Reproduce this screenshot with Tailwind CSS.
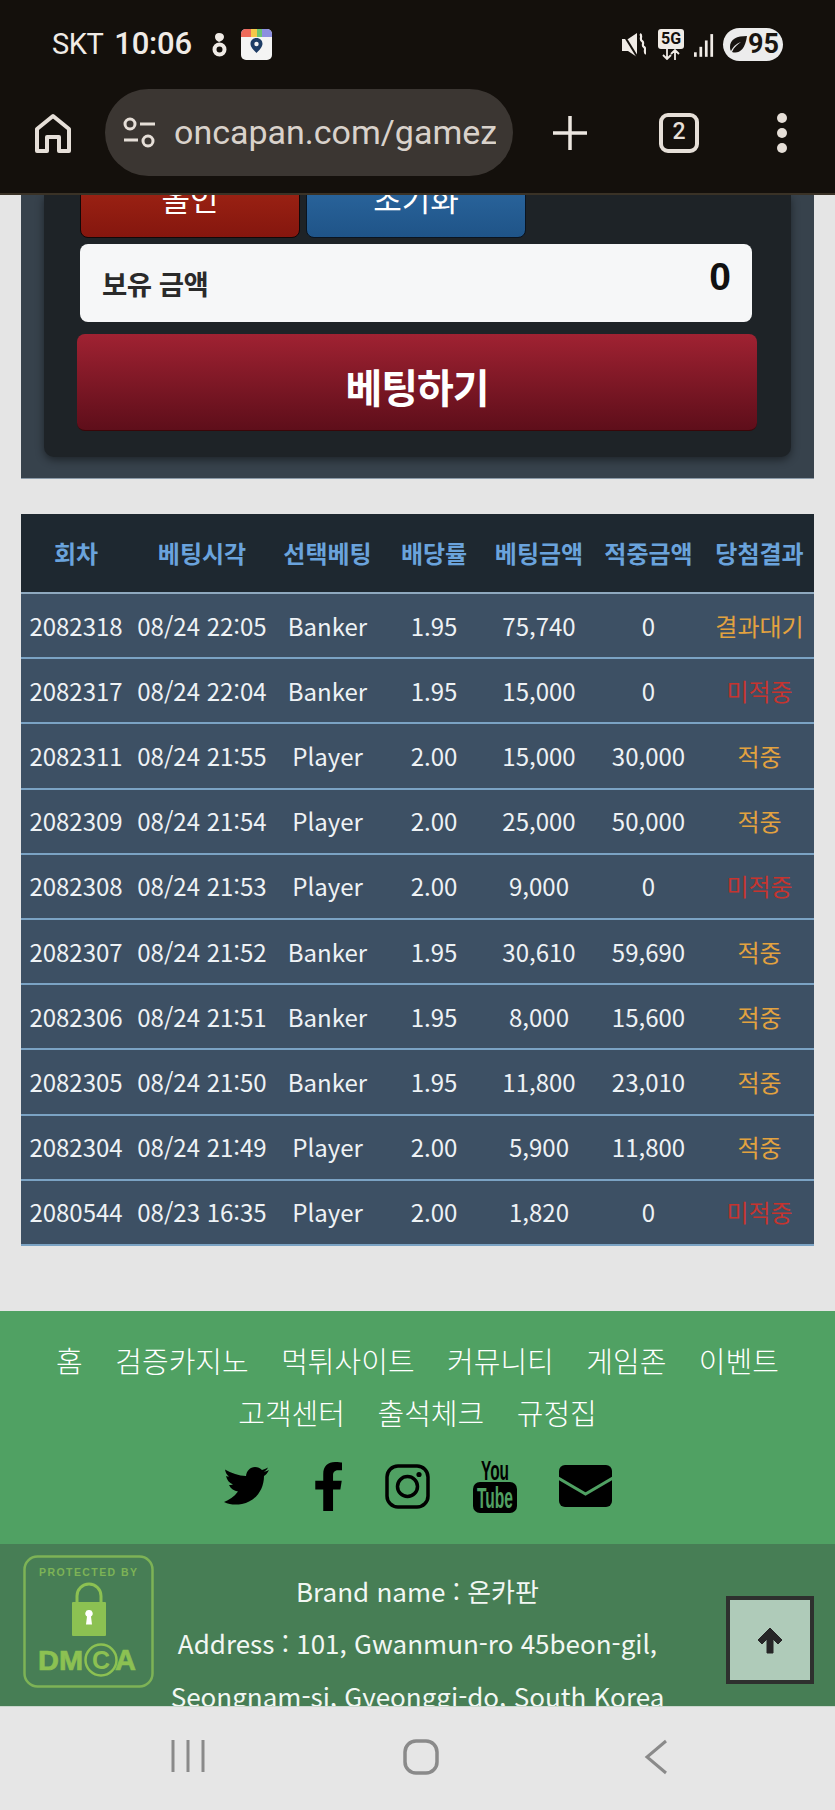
<!DOCTYPE html>
<html lang="ko">
<head>
<meta charset="UTF-8">
<title>oncapan</title>
<script src="https://cdn.jsdelivr.net/npm/@tailwindcss/browser@4"></script>
</head>
<body class="w-[835px] h-[1810px] overflow-hidden bg-[#e5e5e5] font-['Noto_Sans_CJK_KR',sans-serif]">

<!-- phone status bar + browser toolbar -->
<div class="h-[195px] bg-[#14100c] border-b-2 border-[#3a3226] text-[#f0ebe6]">
  <div class="h-[89px] flex items-center pl-[52px] pr-[52px]">
    <span class="font-['Roboto',sans-serif] text-[29px] tracking-[-0.5px]">SKT</span>
    <span class="font-['Roboto',sans-serif] font-medium text-[31px] ml-[11px] tracking-[-0.2px]">10:06</span>
    <svg class="ml-[20px]" width="15" height="26" viewBox="0 0 15 26"><circle cx="7.500" cy="17.500" r="5" fill="none" stroke="#f0ebe6" stroke-width="4"/><path d="M7 1c3 0 5 1.500 5 4 0 2-2 4-5 5-2.500-1-4-3-4-5 0-2.500 1.500-4 4-4z" fill="#f0ebe6"/></svg>
    <svg class="ml-[14px]" width="31" height="31" viewBox="0 0 31 31"><rect width="31" height="31" rx="5" fill="#f4f4f4"/><path d="M5 0h21a5 5 0 0 1 5 5v3H0V5a5 5 0 0 1 5-5z" fill="#8c8fe0"/><path d="M5 0h5v8H0V5a5 5 0 0 1 5-5z" fill="#ef6a5a"/><path d="M10 0h6v8h-6z" fill="#f5c84a"/><path d="M16 0h5v8h-5z" fill="#6cc56f"/><path d="M15.500 9c-3.600 0-6 2.600-6 5.800 0 3.600 3.600 6.800 6 9.200 2.400-2.400 6-5.600 6-9.200 0-3.200-2.400-5.800-6-5.800z" fill="#1e3d66"/><circle cx="15.500" cy="15" r="2.200" fill="#f4f4f4"/></svg>
    <div class="ml-auto flex items-center">
      <svg width="24" height="30" viewBox="0 0 24 30"><path d="M0 9h6l9-6v24l-9-6H0z" fill="#f0ebe6"/><path d="M0 2l16 26" stroke="#14100c" stroke-width="2"/><path d="M18 4c3 2 -1 5 2 7s-1 4 2 6-1 4 2 7" fill="none" stroke="#f0ebe6" stroke-width="2.200"/></svg>
      <div class="ml-[12px] w-[26px] flex flex-col items-center">
        <span class="w-[26px] h-[20px] bg-[#f0ebe6] rounded-[3px] text-[#14100c] text-[16px] leading-[20px] text-center font-bold font-['Roboto',sans-serif]">5G</span>
        <svg width="20" height="11" viewBox="0 0 20 11"><path d="M6 0v10M2 6l4 4 4-4M14 11V1M10 5l4-4 4 4" fill="none" stroke="#f0ebe6" stroke-width="1.800"/></svg>
      </div>
      <svg class="ml-[10px]" width="20" height="30" viewBox="0 0 22 30"><rect x="0" y="23" width="3" height="5" fill="#f0ebe6"/><rect x="6" y="17" width="3" height="11" fill="#f0ebe6"/><rect x="12" y="10" width="3" height="18" fill="#f0ebe6"/><rect x="18" y="3" width="3" height="25" fill="#f0ebe6"/></svg>
      <div class="ml-[9px] w-[60px] h-[33px] bg-[#ececec] rounded-full flex items-center pl-[4px] text-[#181410]">
        <svg width="21" height="20" viewBox="0 0 21 20"><path d="M20 1C10 1 3 4 3 12c0 2 .5 3 1 4 3-6 7-8 10-9-3 2-7 5-9 10 6 2 13-1 15-16z" fill="#181410"/></svg>
        <span class="font-['Roboto',sans-serif] font-bold text-[27px] leading-none">95</span>
      </div>
    </div>
  </div>
  <div class="flex items-center h-[87px]">
    <svg class="ml-[34px]" width="38" height="40" viewBox="0 0 38 40"><path d="M3 38V16L19 3l16 13v22H25V24H13v14z" fill="none" stroke="#e6dfd8" stroke-width="4" stroke-linejoin="round"/></svg>
    <div class="ml-[33px] w-[408px] h-[87px] rounded-full bg-[#3b3632] flex items-center pl-[18px]">
      <svg width="33" height="31" viewBox="0 0 33 31"><circle cx="7" cy="7" r="5" fill="none" stroke="#e6dfd8" stroke-width="3"/><path d="M17 7h15M1 23h14" stroke="#e6dfd8" stroke-width="3"/><circle cx="25" cy="24" r="5" fill="none" stroke="#e6dfd8" stroke-width="3"/></svg>
      <div class="ml-[18px] w-[322px] overflow-hidden whitespace-nowrap font-['Roboto',sans-serif] text-[34px] text-[#d9d2cb]">oncapan.com/gamezone</div>
    </div>
    <svg class="ml-[39px]" width="36" height="36" viewBox="0 0 36 36"><path d="M18 1v34M1 18h34" stroke="#ece6e0" stroke-width="3.500"/></svg>
    <div class="ml-[71px] w-[40px] h-[40px] border-[4px] border-[#e6dfd8] rounded-[9px] flex items-center justify-center font-['Roboto',sans-serif] font-medium text-[23px] text-[#e6dfd8]">2</div>
    <div class="ml-[78px] flex flex-col gap-[5px]">
      <span class="w-[10px] h-[10px] rounded-full bg-[#e6dfd8]"></span>
      <span class="w-[10px] h-[10px] rounded-full bg-[#e6dfd8]"></span>
      <span class="w-[10px] h-[10px] rounded-full bg-[#e6dfd8]"></span>
    </div>
  </div>
</div>

<!-- scrolled page -->
<div class="h-[1511px] overflow-hidden">
  <div class="mx-[21px] w-[793px] h-[284px] bg-[#37424c] border-b border-[#8b9aa8] px-[23px]">
    <div class="h-[262px] bg-[#1e2327] rounded-b-[10px] shadow-[0_3px_8px_rgba(0,0,0,0.45)] overflow-hidden">
      <div class="flex gap-[6px] pl-[36px] -mt-[27px]">
        <div class="w-[220px] h-[70px] rounded-[8px] border border-[#120808] bg-gradient-to-b from-[#a52716] to-[#85160e] text-white text-[31px] text-center leading-[58px]">올인</div>
        <div class="w-[220px] h-[70px] rounded-[8px] border border-[#0a1420] bg-gradient-to-b from-[#2e6ba4] to-[#1f5488] text-white text-[31px] text-center leading-[58px]">초기화</div>
      </div>
      <div class="ml-[36px] mt-[6px] w-[672px] h-[78px] rounded-[8px] bg-[#f6f7f8] flex justify-between pl-[22px] pr-[21px]">
        <span class="text-[27.500px] font-bold text-[#2a2a2a] leading-[78px] tracking-[-0.5px]">보유 금액</span>
        <span class="font-['Liberation_Sans',sans-serif] text-[39px] font-bold text-[#111] leading-[66px]">0</span>
      </div>
      <div class="ml-[33px] mt-[12px] w-[680px] h-[97px] rounded-[8px] border-b border-[#3a0608] bg-gradient-to-b from-[#a02232] to-[#5e0e1a] text-white text-[40px] font-bold text-center leading-[104px] tracking-[-1px]">베팅하기</div>
    </div>
  </div>

  <table class="mt-[35px] ml-[21px] w-[793px] table-fixed border-collapse text-center text-[24px] text-[#eef2f5] whitespace-nowrap">
    <thead class="bg-[#1e2830] text-[#6aa3dc]">
      <tr class="h-[79px] border-b-2 border-[#8fa9bf]">
        <th class="w-[110px] font-bold">회차</th><th class="w-[142px] font-bold">베팅시각</th><th class="w-[109px] font-bold">선택베팅</th><th class="w-[104px] font-bold">배당률</th><th class="w-[106px] font-bold">베팅금액</th><th class="w-[113px] font-bold">적중금액</th><th class="w-[109px] font-bold">당첨결과</th>
      </tr>
    </thead>
    <tbody class="bg-[#3d5064]">
      <tr class="h-[65.2px] border-b-2 border-[#7ba3c4]"><td>2082318</td><td>08/24 22:05</td><td>Banker</td><td>1.95</td><td>75,740</td><td>0</td><td class="text-[#e3a23f]">결과대기</td></tr>
      <tr class="h-[65.2px] border-b-2 border-[#7ba3c4]"><td>2082317</td><td>08/24 22:04</td><td>Banker</td><td>1.95</td><td>15,000</td><td>0</td><td class="text-[#c5342f]">미적중</td></tr>
      <tr class="h-[65.2px] border-b-2 border-[#7ba3c4]"><td>2082311</td><td>08/24 21:55</td><td>Player</td><td>2.00</td><td>15,000</td><td>30,000</td><td class="text-[#e3a23f]">적중</td></tr>
      <tr class="h-[65.2px] border-b-2 border-[#7ba3c4]"><td>2082309</td><td>08/24 21:54</td><td>Player</td><td>2.00</td><td>25,000</td><td>50,000</td><td class="text-[#e3a23f]">적중</td></tr>
      <tr class="h-[65.2px] border-b-2 border-[#7ba3c4]"><td>2082308</td><td>08/24 21:53</td><td>Player</td><td>2.00</td><td>9,000</td><td>0</td><td class="text-[#c5342f]">미적중</td></tr>
      <tr class="h-[65.2px] border-b-2 border-[#7ba3c4]"><td>2082307</td><td>08/24 21:52</td><td>Banker</td><td>1.95</td><td>30,610</td><td>59,690</td><td class="text-[#e3a23f]">적중</td></tr>
      <tr class="h-[65.2px] border-b-2 border-[#7ba3c4]"><td>2082306</td><td>08/24 21:51</td><td>Banker</td><td>1.95</td><td>8,000</td><td>15,600</td><td class="text-[#e3a23f]">적중</td></tr>
      <tr class="h-[65.2px] border-b-2 border-[#7ba3c4]"><td>2082305</td><td>08/24 21:50</td><td>Banker</td><td>1.95</td><td>11,800</td><td>23,010</td><td class="text-[#e3a23f]">적중</td></tr>
      <tr class="h-[65.2px] border-b-2 border-[#7ba3c4]"><td>2082304</td><td>08/24 21:49</td><td>Player</td><td>2.00</td><td>5,900</td><td>11,800</td><td class="text-[#e3a23f]">적중</td></tr>
      <tr class="h-[65.2px] border-b-2 border-[#7ba3c4]"><td>2080544</td><td>08/23 16:35</td><td>Player</td><td>2.00</td><td>1,820</td><td>0</td><td class="text-[#c5342f]">미적중</td></tr>
    </tbody>
  </table>

  <footer class="mt-[65px]">
    <div class="h-[233px] bg-[#50a163] pt-[23px]">
      <nav class="w-[790px] mx-auto flex flex-wrap justify-center gap-x-[32.500px] text-white text-[29px] font-light leading-[52px]">
        <span>홈</span><span>검증카지노</span><span>먹튀사이트</span><span>커뮤니티</span><span>게임존</span><span>이벤트</span><span class="basis-full h-0"></span><span>고객센터</span><span>출석체크</span><span>규정집</span>
      </nav>
      <div class="flex items-center justify-center mt-[22px] h-[53px] text-black">
        <!-- twitter -->
        <svg width="45" height="38" viewBox="0 0 45 38"><path d="M31 0C26 0 22.500 4 22 9 15 9 7 6 1 2.500 1.500 6 3 8 5 9.500 4 9.500 3 9.500 2 9 3 13 5 16 9 17.500 7.500 18 6.500 18 5 18 7 22 10 24 14 24.500 10 30 5 33 0 35 6 38 12 38 18 37 30 35 40 24 40 9 42 8 43.500 6 45 3 43 4 41 4.500 40 4.500 42 3.500 43.500 2 44 .5 42 1.500 40 2.500 38 3 36 1 34 0 31 0Z"/></svg>
        <!-- facebook -->
        <svg class="ml-[46px]" width="27" height="49" viewBox="20 0 276 512" preserveAspectRatio="none"><path d="M279.140 288l14.220-92.660h-88.910v-60.130c0-25.350 12.420-50.060 52.240-50.060h40.420V6.260S260.430 0 225.360 0c-73.220 0-121.080 44.380-121.080 124.720v70.620H22.890V288h81.390v224h100.170V288z"/></svg>
        <!-- instagram -->
        <svg class="ml-[43px]" width="45" height="45" viewBox="0 0 45 45"><rect x="2" y="2" width="41" height="41" rx="11" fill="none" stroke="#000" stroke-width="3.500"/><circle cx="22.500" cy="22.500" r="10" fill="none" stroke="#000" stroke-width="3.500"/><circle cx="34" cy="10.500" r="2.600" fill="#000"/></svg>
        <!-- youtube -->
        <svg class="ml-[43px]" width="44" height="53" viewBox="0 0 44 53"><text x="22" y="20" text-anchor="middle" font-family="Liberation Sans" font-weight="700" font-size="27" textLength="28" lengthAdjust="spacingAndGlyphs">You</text><rect x="0" y="22" width="44" height="31" rx="7"/><text x="22" y="48" text-anchor="middle" font-family="Liberation Sans" font-weight="700" font-size="29" fill="#50a163" textLength="36" lengthAdjust="spacingAndGlyphs">Tube</text></svg>
        <!-- mail -->
        <svg class="ml-[42px]" width="53" height="42" viewBox="0 0 53 42"><rect width="53" height="42" rx="6"/><path d="M-1 13 L26.500 29 L54 13" fill="none" stroke="#50a163" stroke-width="3"/></svg>
      </div>
    </div>

    <div class="relative h-[300px] bg-[#477e55] pt-[21px] text-center text-[#f2f7f3] text-[26px] leading-[52.500px]">
      <p>Brand name : 온카판</p>
      <p>Address : 101, Gwanmun-ro 45beon-gil,</p>
      <p>Seongnam-si, Gyeonggi-do, South Korea</p>
      <!-- DMCA badge -->
      <svg class="absolute left-[23px] top-[11px]" width="131" height="133" viewBox="0 0 131 133">
        <rect x="1.500" y="1.500" width="128" height="130" rx="13" fill="none" stroke="#7db356" stroke-width="2.500"/>
        <text x="65" y="21" text-anchor="middle" font-family="Liberation Sans" font-weight="700" font-size="10.500" fill="#7db356" textLength="98" lengthAdjust="spacing">PROTECTED BY</text>
        <path d="M54 47v-6a12 12 0 0 1 24 0v6" fill="none" stroke="#8cc152" stroke-width="3"/>
        <rect x="49" y="47" width="34" height="34" rx="1" fill="#8cc152"/>
        <path d="M66 55a3.500 3.500 0 0 1 2 6.500l1 8h-6l1-8a3.500 3.500 0 0 1 2-6.500z" fill="#fff"/>
        <text x="15" y="115" font-family="Liberation Sans" font-weight="700" font-size="27" fill="#8cc152" stroke="#8cc152" stroke-width="0.700" textLength="45" lengthAdjust="spacingAndGlyphs">DM</text>
        <circle cx="78" cy="105" r="15.500" fill="none" stroke="#8cc152" stroke-width="2.500"/>
        <text x="78" y="114" text-anchor="middle" font-family="Liberation Sans" font-weight="700" font-size="25" fill="#8cc152">C</text>
        <text x="92" y="115" font-family="Liberation Sans" font-weight="700" font-size="29" fill="#8cc152" stroke="#8cc152" stroke-width="0.700">A</text>
      </svg>
      <!-- back to top -->
      <div class="absolute left-[726px] top-[52px] w-[88px] h-[88px] border-[4px] border-[#2e302e] bg-[#afcbb9] flex items-center justify-center">
        <svg width="28" height="28" viewBox="0 0 28 28"><path d="M14 2 L26 14 L22 18 L17 13 V27 H11 V13 L6 18 L2 14 Z" fill="#262626" stroke="#262626" stroke-linejoin="round" stroke-width="1"/></svg>
      </div>
    </div>
  </footer>
</div>

<!-- phone navigation bar -->
<div class="h-[104px] bg-[#e6e6e6] border-t border-[#c9d6cc] flex items-start pt-[32px]">
  <svg class="ml-[171px]" width="34" height="34" viewBox="0 0 34 34"><path d="M2 1v32M17 1v32M32 1v32" stroke="#8a8a8a" stroke-width="3"/></svg>
  <svg class="ml-[198px]" width="36" height="36" viewBox="0 0 36 36"><rect x="2" y="2" width="32" height="32" rx="11" fill="none" stroke="#8a8a8a" stroke-width="3.500"/></svg>
  <svg class="ml-[204px]" width="26" height="36" viewBox="0 0 26 36"><path d="M23 2 L4 18 L23 34" fill="none" stroke="#8a8a8a" stroke-width="3"/></svg>
</div>
</body>
</html>
